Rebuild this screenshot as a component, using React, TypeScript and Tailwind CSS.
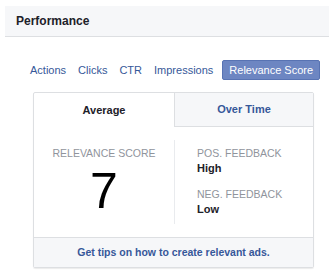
import React from "react";

export default function App() {
  const font = { fontFamily: '"Liberation Sans", Arial, sans-serif' };
  return (
    <div className="w-[329px] h-[272px] bg-white overflow-hidden" style={font}>
      <div className="pt-[6px] pl-[5px]">
        <div className="h-[31px] bg-[#f6f7f9] border-b border-[#dddfe2] flex items-center pl-[11px]">
          <span className="text-[12px] font-bold text-[#1d2129]">Performance</span>
        </div>
      </div>
      <div className="mt-[23px] flex items-center pl-[30px] text-[11px] text-[#365899] h-[20px]">
        <span>Actions</span>
        <span className="ml-[12px]">Clicks</span>
        <span className="ml-[12px]">CTR</span>
        <span className="ml-[12px]">Impressions</span>
        <span className="ml-[9px] h-[20px] px-[6px] flex items-center bg-[#6d86c2] border border-[#5873b3] rounded-[2px] text-white">
          Relevance Score
        </span>
      </div>
      <div className="ml-[33px] mt-[12px] w-[281px] h-[176px] border border-[#dddfe2] rounded-[2px] shadow-[0_1px_1px_rgba(0,0,0,0.08)] flex flex-col">
        <div className="flex h-[34px]">
          <div className="w-[140px] flex items-center justify-center text-[11px] font-bold text-[#1d2129]">
            Average
          </div>
          <div className="flex-1 flex items-center justify-center bg-[#f6f7f9] border-l border-b border-[#dddfe2] text-[11px] font-bold text-[#365899]">
            Over Time
          </div>
        </div>
        <div className="flex flex-1 py-[13px]">
          <div className="w-[140px] flex flex-col items-center pt-[7px]">
            <span className="text-[10.5px] text-[#90949c] leading-[13px]">RELEVANCE SCORE</span>
            <span className="text-[50px] leading-[50px] text-black mt-[6px]">7</span>
          </div>
          <div className="flex-1 border-l border-[#e9ebee] pl-[22px] pt-[7px] flex flex-col">
            <span className="text-[10.5px] text-[#90949c] leading-[13px]">POS. FEEDBACK</span>
            <span className="text-[11px] font-bold text-[#1d2129] leading-[13px] mt-[2px]">High</span>
            <span className="text-[10.5px] text-[#90949c] leading-[13px] mt-[13px]">NEG. FEEDBACK</span>
            <span className="text-[11px] font-bold text-[#1d2129] leading-[13px] mt-[2px]">Low</span>
          </div>
        </div>
        <div className="h-[30px] bg-[#f6f7f9] border-t border-[#dddfe2] flex items-center justify-center text-[10.5px] font-bold text-[#365899]">
          Get tips on how to create relevant ads.
        </div>
      </div>
    </div>
  );
}
